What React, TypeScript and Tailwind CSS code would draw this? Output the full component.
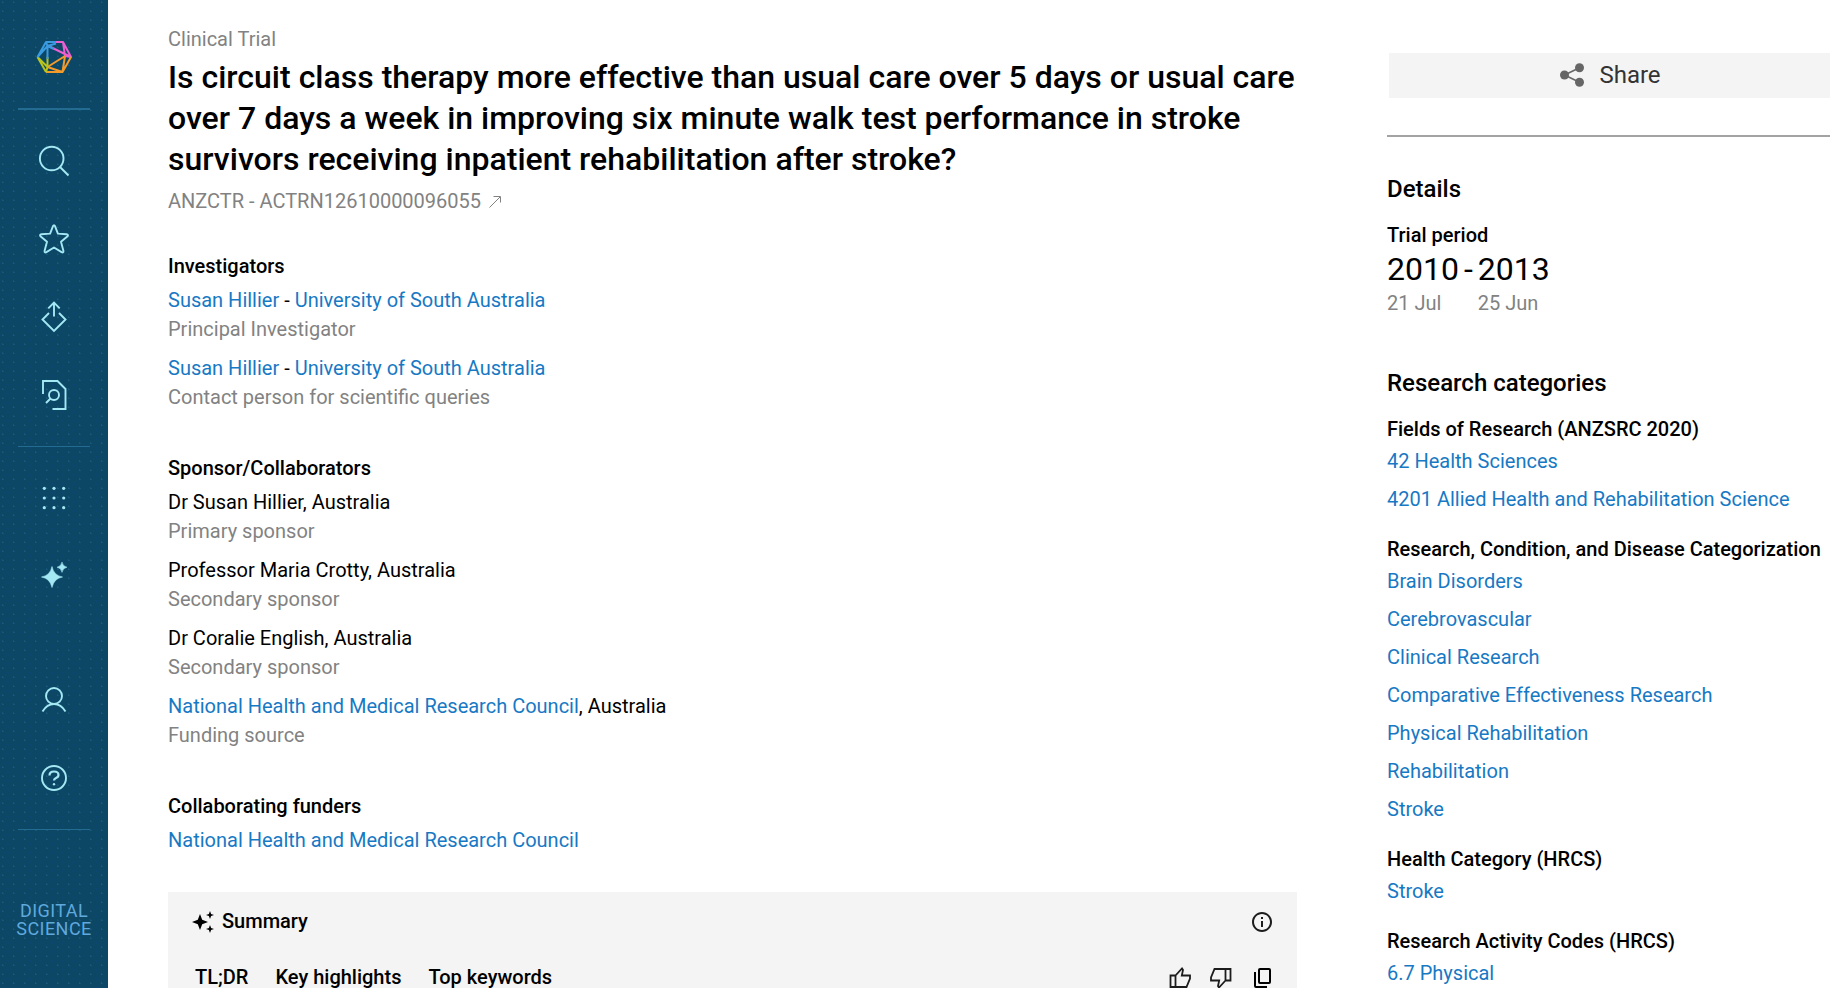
import React from "react";
import { MdOutlineInfo } from "react-icons/md";

const ico = "h-9 w-9 text-[#a3e8f3]";

function Logo() {
  return (
    <svg viewBox="0 0 36 36" className="h-9 w-9" fill="none" strokeWidth="2" strokeLinejoin="round" aria-hidden="true">
      <path d="M19 3 H27 L35 18 L11.500 6.500 M27 3 L29 17 M29 17 L35 18" stroke="#ec5fd0" />
      <path d="M10 33 H26.500 L35 18 M11.500 28 L29 17 M11.500 28 L26.500 33 M29 17 L26.500 33" stroke="#f39a2b" />
      <path d="M1.500 18 L10 33 M1.500 18 L11.500 28 M10 33 L11.500 28 M11.500 18 V28" stroke="#b9c41c" />
      <path d="M1.500 18 L10 3 H20 M1.500 18 L11.500 7 M10 3 L11.500 7 M11.500 7 V20 M11.500 7 L20 4.500 M11.500 7 L18 10" stroke="#3a9be0" />
    </svg>
  );
}

function Svg({ children }: { children: React.ReactNode }) {
  return (
    <svg viewBox="0 0 36 36" className={ico} fill="none" stroke="currentColor" strokeWidth="1.9" aria-hidden="true">
      {children}
    </svg>
  );
}

function NavButton({ label, children }: { label: string; children: React.ReactNode }) {
  return (
    <button type="button" aria-label={label} className="flex h-9 w-9 items-center justify-center">
      {children}
    </button>
  );
}

function Sidebar() {
  return (
    <nav
      aria-label="Main"
      className="flex w-[108px] shrink-0 flex-col items-center bg-[#0d4766] bg-[radial-gradient(circle_at_25%_25%,#1a587c_0.7px,transparent_1px),radial-gradient(circle_at_75%_75%,#0f4478_0.7px,transparent_1px)] bg-size-[11px_9px] pt-[39px]"
    >
      <a href="#home" aria-label="Home">
        <Logo />
      </a>
      <hr className="mt-[33px] w-[72px] border-t-2 border-[#246b92]" />
      <div className="mt-[33px] flex flex-col gap-[42px]">
        <NavButton label="Search">
          <Svg>
            <circle cx="15.700" cy="15.500" r="11.800" />
            <path d="M24 24 L32.500 32.500" />
          </Svg>
        </NavButton>
        <NavButton label="Favorites">
          <Svg>
            <path
              d="M16.900 5.300 Q18 3.200 19.100 5.300 L21.900 12.600 L30.500 13.300 Q33 13.700 31.300 15.600 L25 20.800 L27.400 29.800 Q27.700 32.200 25.600 31.100 L18 26.500 L10.400 31.100 Q8.300 32.200 8.600 29.800 L11 20.800 L4.700 15.600 Q3 13.700 5.500 13.300 L14.100 12.600 Z"
              strokeLinejoin="round"
            />
          </Svg>
        </NavButton>
        <NavButton label="Export">
          <Svg>
            <path d="M18 17.500 V4 M12.300 9.300 L18 3.500 L23.700 9.300 M13 14 L6.500 20.500 L18 32 L29.500 20.500 L23 14" />
          </Svg>
        </NavButton>
        <NavButton label="Find in document">
          <Svg>
            <path d="M7 17 V4 H21.500 L29.500 12 V32 H16.500" />
            <circle cx="18" cy="18" r="5" />
            <path d="M14.500 21.500 L10 26" />
          </Svg>
        </NavButton>
      </div>
      <hr className="mt-[33px] w-[72px] border-[#246b92]" />
      <div className="mt-[33px] flex flex-col gap-[42px]">
        <NavButton label="Apps">
          <svg viewBox="0 0 36 36" className={ico} fill="currentColor" aria-hidden="true">
            {[8.300, 18, 27.700].map((y) => [8.300, 18, 27.700].map((x) => <circle key={`${x}-${y}`} cx={x} cy={y} r="1.600" />))}
          </svg>
        </NavButton>
        <NavButton label="Assistant">
          <svg viewBox="0 0 36 36" className={ico} fill="currentColor" aria-hidden="true">
            <path d="M16 8.500 Q17.800 17.500 26.500 19 Q17.800 20.500 16 29.500 Q14.200 20.500 5.500 19 Q14.200 17.500 16 8.500 Z" stroke="currentColor" strokeWidth="0.600" />
            <path d="M26 4 Q26.800 8.400 31 9.200 Q26.800 10 26 14.400 Q25.200 10 21 9.200 Q25.200 8.400 26 4 Z" stroke="currentColor" strokeWidth="0.500" />
          </svg>
        </NavButton>
      </div>
      <div className="mt-[88px] flex flex-col gap-[42px]">
        <NavButton label="Account">
          <Svg>
            <circle cx="18" cy="14" r="8" />
            <path d="M6.500 29.500 Q11 22 18 22 Q25 22 29.500 29.500" />
          </Svg>
        </NavButton>
        <NavButton label="Help">
          <Svg>
            <circle cx="18" cy="18" r="12" />
            <path d="M13.500 15.500 Q13.500 11.500 18 11.500 Q22.500 11.500 22.500 15 Q22.500 17 20 18 Q18 19 18 20.500" strokeWidth="2.200" />
            <circle cx="18" cy="24.200" r="1.200" fill="currentColor" stroke="none" />
          </Svg>
        </NavButton>
      </div>
      <hr className="mt-[33px] w-[72px] border-[#246b92]" />
      <a href="#digital-science" className="mt-[72px] text-center text-lg leading-[18px] tracking-wide text-[#5fa9dc]">
        DIGITAL
        <br />
        SCIENCE
      </a>
    </nav>
  );
}

const link = "text-[#1779c4]";
const uni = "University of South Australia";
const nhmrc = "National Health and Medical Research Council";

function Person({ role, children }: { role: string; children: React.ReactNode }) {
  return (
    <li>
      <div>{children}</div>
      <div className="text-[#828282]">{role}</div>
    </li>
  );
}

function Block({ title, children }: { title: string; children: React.ReactNode }) {
  return (
    <section>
      <h2 className="mb-[5px] font-medium">{title}</h2>
      <ul className="flex flex-col gap-[10px]">{children}</ul>
    </section>
  );
}

function Links({ title, items }: { title: string; items: string[] }) {
  return (
    <section>
      <h3 className="mb-[3px] font-medium whitespace-nowrap">{title}</h3>
      <ul className="flex flex-col gap-[9px]">
        {items.map((t) => (
          <li key={t}>
            <a href="#category" className={link}>{t}</a>
          </li>
        ))}
      </ul>
    </section>
  );
}

export default function App() {
  return (
    <div className="flex h-screen overflow-hidden bg-white font-[Roboto,sans-serif] text-[20px] leading-[29px] text-black">
      <Sidebar />
      <main className="ml-[60px] min-w-0 flex-1 pt-[25px]">
        <p className="text-[#828282]">Clinical Trial</p>
        <h1 className="mt-[3px] text-[32px] leading-[41px] font-medium">
          Is circuit class therapy more effective than usual care over 5 days or usual care over 7 days a week in
          improving six minute walk test performance in stroke survivors receiving inpatient rehabilitation after
          stroke?
        </h1>
        <a href="#registry" className="mt-[7px] flex items-center gap-2 text-[#828282]">
          ANZCTR - ACTRN12610000096055
          <svg viewBox="0 0 12 12" className="h-3 w-3" fill="none" stroke="currentColor" aria-hidden="true">
            <path d="M0.500 11.500 L11 1 M4.500 0.500 H11.500 V6.500" />
          </svg>
        </a>
        <div className="mt-9 flex flex-col gap-[42px]">
          <Block title="Investigators">
            <Person role="Principal Investigator">
              <a href="#person" className={link}>Susan Hillier</a> - <a href="#org" className={link}>{uni}</a>
            </Person>
            <Person role="Contact person for scientific queries">
              <a href="#person" className={link}>Susan Hillier</a> - <a href="#org" className={link}>{uni}</a>
            </Person>
          </Block>
          <Block title="Sponsor/Collaborators">
            <Person role="Primary sponsor">Dr Susan Hillier, Australia</Person>
            <Person role="Secondary sponsor">Professor Maria Crotty, Australia</Person>
            <Person role="Secondary sponsor">Dr Coralie English, Australia</Person>
            <Person role="Funding source">
              <a href="#org" className={link}>{nhmrc}</a>, Australia
            </Person>
          </Block>
          <Block title="Collaborating funders">
            <li>
              <a href="#org" className={link}>{nhmrc}</a>
            </li>
          </Block>
        </div>
        <section className="mt-[37px] bg-[#f4f4f4] pt-[15px] pr-[23px] pb-8 pl-6">
          <div className="flex items-center justify-between">
            <h2 className="flex items-center gap-2 font-medium">
              <svg viewBox="0 0 22 22" className="h-[22px] w-[22px]" fill="currentColor" aria-hidden="true">
                <path d="M8 3 L10.200 8.800 L16 11 L10.200 13.200 L8 19 L5.800 13.200 L0 11 L5.800 8.800 Z" />
                <path d="M18 0 L19.100 2.900 L22 4 L19.100 5.100 L18 8 L16.900 5.100 L14 4 L16.900 2.900 Z M18 14 L19.100 16.900 L22 18 L19.100 19.100 L18 22 L16.900 19.100 L14 18 L16.900 16.900 Z" />
              </svg>
              Summary
            </h2>
            <button type="button" aria-label="About this summary">
              <MdOutlineInfo className="h-6 w-6 text-[#1c1c1c]" />
            </button>
          </div>
          <div className="mt-[27px] flex items-center justify-between">
            <div className="ml-[3px] flex gap-[27px] font-medium">
              <button type="button">TL;DR</button>
              <button type="button">Key highlights</button>
              <button type="button">Top keywords</button>
            </div>
            <div className="flex gap-[17px] text-[#1c1c1c]">
              <button type="button" aria-label="Helpful">
                <svg viewBox="0 0 24 24" className="h-6 w-6" fill="none" stroke="currentColor" strokeWidth="1.800" aria-hidden="true">
                  <path d="M2.500 9.500 H7.500 V21 H2.500 Z M7.500 9.500 L14 2.500 L15 4 L13.800 9.500 H22 V12.500 L18.500 21 H7.500" />
                </svg>
              </button>
              <button type="button" aria-label="Not helpful">
                <svg viewBox="0 0 24 24" className="h-6 w-6" fill="none" stroke="currentColor" strokeWidth="1.800" aria-hidden="true">
                  <path d="M21.500 14.500 H16.500 V3 H21.500 Z M16.500 14.500 L10 21.500 L9 20 L10.200 14.500 H2 V11.500 L5.500 3 H16.500" />
                </svg>
              </button>
              <button type="button" aria-label="Copy">
                <svg viewBox="0 0 24 24" className="h-6 w-6 text-black" fill="none" stroke="currentColor" strokeWidth="2" aria-hidden="true">
                  <rect x="9" y="3" width="11" height="14" rx="1" />
                  <path d="M5 6 V20 Q5 21 6 21 H17" />
                </svg>
              </button>
            </div>
          </div>
        </section>
      </main>
      <aside className="ml-[90px] w-[443px] shrink-0 pt-[53px]">
        <button
          type="button"
          className="ml-[2px] flex h-[45px] w-full items-center justify-center gap-[15px] bg-[#f4f4f4] pb-[2px] text-2xl text-[#333]"
        >
          <svg viewBox="0 0 24 24" className="h-6 w-6 text-[#666]" fill="currentColor" aria-hidden="true">
            <circle cx="19.500" cy="4.700" r="4.500" />
            <circle cx="4.500" cy="12" r="4.500" />
            <circle cx="19.500" cy="19.300" r="4.500" />
            <path d="M19.500 4.700 L4.500 12 L19.500 19.300" fill="none" stroke="currentColor" strokeWidth="1.600" />
          </svg>
          Share
        </button>
        <hr className="mt-[37px] border-t-2 border-[#a3a3a3]" />
        <h2 className="mt-9 text-2xl leading-8 font-medium">Details</h2>
        <h3 className="mt-4 font-medium">Trial period</h3>
        <div className="flex gap-[5px]">
          <div>
            <div className="text-[32px] leading-[39px]">2010</div>
            <div className="text-[#828282]">21 Jul</div>
          </div>
          <div className="text-[32px] leading-[39px]">-</div>
          <div>
            <div className="text-[32px] leading-[39px]">2013</div>
            <div className="text-[#828282]">25 Jun</div>
          </div>
        </div>
        <h2 className="mt-[49px] text-2xl leading-8 font-medium">Research categories</h2>
        <div className="mt-4 flex flex-col gap-[21px]">
          <Links title="Fields of Research (ANZSRC 2020)" items={["42 Health Sciences", "4201 Allied Health and Rehabilitation Science"]} />
          <Links
            title="Research, Condition, and Disease Categorization"
            items={["Brain Disorders", "Cerebrovascular", "Clinical Research", "Comparative Effectiveness Research", "Physical Rehabilitation", "Rehabilitation", "Stroke"]}
          />
          <Links title="Health Category (HRCS)" items={["Stroke"]} />
          <Links title="Research Activity Codes (HRCS)" items={["6.7 Physical"]} />
        </div>
      </aside>
    </div>
  );
}
